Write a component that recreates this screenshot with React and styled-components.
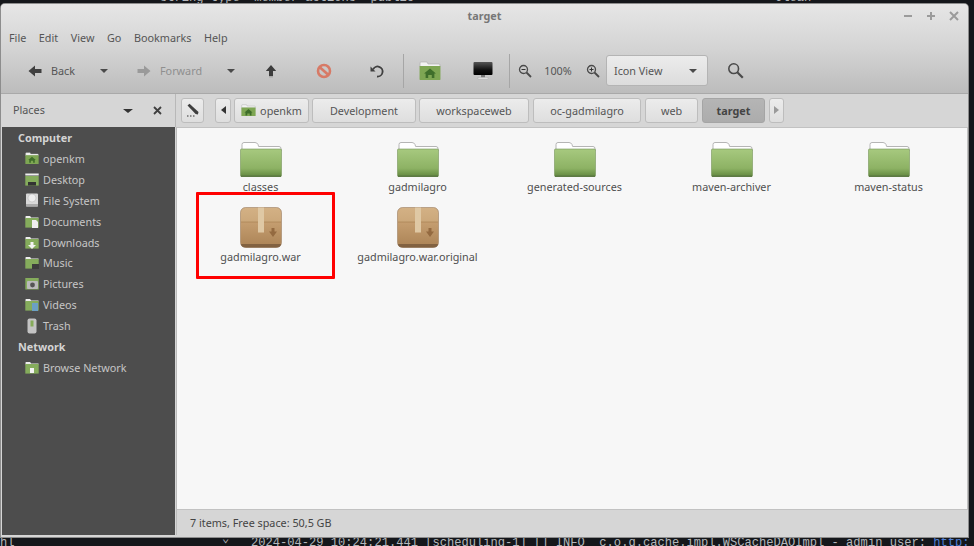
import React from "react"
import styled, { createGlobalStyle } from "styled-components"

const GlobalStyle = createGlobalStyle`
  html, body {
    margin: 0;
    padding: 0;
    height: 100%;
    background: #15171b;
    overflow: hidden;
  }
  #root {
    height: 100%;
  }
`

const Desktop = styled.div`
  position: relative;
  width: 974px;
  height: 546px;
  padding: 4px 6px 9px 1px;
  box-sizing: border-box;
  font-family: "Noto Sans", sans-serif;
  font-size: 10.8px;
  color: #555;
`

const TerminalLine = styled.div`
  position: absolute;
  left: ${(p) => p.$left}px;
  ${(p) => (p.$top !== undefined ? `top: ${p.$top}px;` : `bottom: ${p.$bottom}px;`)}
  font-family: "Liberation Mono", monospace;
  font-size: 12.1px;
  line-height: 12px;
  color: #b4b7bc;
  white-space: pre;
  span {
    color: #4f7fd6;
  }
`

const Window = styled.div`
  position: relative;
  height: 100%;
  display: flex;
  flex-direction: column;
  padding-bottom: 2px;
  box-sizing: border-box;
  border-radius: 4px 4px 0 0;
  background: #d6d6d6;
  box-shadow: 0 0 0 1px #8d8d8d;
  overflow: hidden;
`

const Header = styled.div`
  height: 89px;
  display: flex;
  flex-direction: column;
  flex: none;
  background: linear-gradient(#e6e6e6, #d4d4d4 50%, #bcbcbc);
  border-bottom: 1px solid #a9a9a9;
`

const TitleBar = styled.div`
  position: relative;
  height: 24px;
  flex: none;
  display: flex;
  align-items: center;
  justify-content: center;
  padding-bottom: 2px;
  box-sizing: border-box;
  font-weight: 700;
  color: #777;
`

const WindowButtons = styled.div`
  position: absolute;
  right: 7px;
  top: 5px;
  display: flex;
  gap: 9px;
`

const MenuBar = styled.div`
  height: 20px;
  flex: none;
  display: flex;
  align-items: center;
  padding: 0 0 2px 8px;
  box-sizing: border-box;
  gap: 12.6px;
`

const MenuItem = styled.span``

const Toolbar = styled.div`
  flex: 1;
  display: flex;
  align-items: center;
  padding-left: 27px;
`

const ToolLabel = styled.span`
  color: ${(p) => (p.$off ? "#8f8f8f" : "#555")};
  margin-left: 9px;
  padding-bottom: 1px;
`

const ToolGroup = styled.div`
  display: flex;
  align-items: center;
  width: ${(p) => p.$w}px;
  padding-left: ${(p) => p.$pl || 0}px;
  box-sizing: border-box;
  flex: none;
`

const Caret = styled.span`
  display: inline-block;
  width: 0;
  height: 0;
  border-left: ${(p) => p.$s || 4}px solid transparent;
  border-right: ${(p) => p.$s || 4}px solid transparent;
  border-top: ${(p) => (p.$s ? p.$s - 1 : 4)}px solid ${(p) => p.$c || "#4a4a4a"};
  margin-left: ${(p) => p.$ml || 0}px;
  margin-right: ${(p) => p.$mr || 0}px;
`

const Separator = styled.div`
  width: 1px;
  height: 34px;
  background: #a6a6a6;
  flex: none;
`

const ZoomLevel = styled.span`
  width: 28px;
  margin-right: 14px;
  text-align: center;
  white-space: nowrap;
  flex: none;
`

const ViewSelect = styled.div`
  width: 102px;
  height: 31px;
  flex: none;
  display: flex;
  align-items: center;
  justify-content: space-between;
  padding: 0 10px 0 7px;
  box-sizing: border-box;
  background: linear-gradient(#ececec, #dcdcdc);
  border: 1px solid #b4b4b4;
  border-radius: 3px;
  margin-left: 6px;
`

const PathRow = styled.div`
  height: 33px;
  flex: none;
  display: flex;
  align-items: center;
`

const PlacesHead = styled.div`
  width: 175px;
  flex: none;
  box-sizing: border-box;
  height: 100%;
  display: flex;
  align-items: center;
  padding: 0 13px 0 12px;
  border-right: 1px solid #b8b8b8;
`

const PlacesTitle = styled.span`
  flex: 1;
  padding-bottom: 2px;
`

const PathBar = styled.div`
  flex: 1;
  display: flex;
  align-items: center;
  padding-left: 5px;
`

const Crumb = styled.div`
  height: 25px;
  display: flex;
  align-items: center;
  justify-content: center;
  gap: 4px;
  flex: none;
  box-sizing: border-box;
  width: ${(p) => p.$w}px;
  margin-right: ${(p) => (p.$gap === undefined ? 4 : p.$gap)}px;
  padding-bottom: 1px;
  border: 1px solid ${(p) => (p.$active ? "#a5a5a5" : "#bdbdbd")};
  border-radius: 3px;
  background: ${(p) => (p.$active ? "linear-gradient(#b5b5b5, #acacac)" : "linear-gradient(#ececec, #dedede)")};
  font-weight: ${(p) => (p.$active ? 700 : 400)};
  color: ${(p) => (p.$active ? "#444" : "#555")};
`

const Tri = styled.span`
  display: inline-block;
  width: 0;
  height: 0;
  border-top: 4px solid transparent;
  border-bottom: 4px solid transparent;
  ${(p) =>
    p.$right
      ? `border-left: 5px solid ${p.$c};`
      : `border-right: 5px solid ${p.$c};`}
`

const Main = styled.div`
  flex: 1;
  min-height: 0;
  display: flex;
  padding-left: 1px;
`

const Sidebar = styled.div`
  width: 173px;
  flex: none;
  background: #4d4d4d;
  color: #d4d4d4;
  box-sizing: border-box;
  margin-right: 1px;
`

const SideHead = styled.div`
  height: 21px;
  line-height: 21px;
  padding-left: 16px;
  font-weight: 700;
`

const SideItem = styled.div`
  height: 20.9px;
  display: flex;
  align-items: center;
  gap: 4px;
  padding-left: 23px;
  color: #c6c6c6;
`

const SideIconBox = styled.span`
  width: 14px;
  height: 14px;
  flex: none;
  display: flex;
  align-items: center;
  justify-content: center;
`

const Content = styled.div`
  flex: 1;
  display: flex;
  flex-direction: column;
  min-width: 0;
  border-left: 1px solid #bbb;
`

const FileArea = styled.div`
  position: relative;
  flex: 1;
  background: #f7f7f7;
  border: 1px solid #c2c2c2;
  border-width: 1px 1px 1px 0;
  padding: 14px 0 0 5px;
  display: grid;
  grid-template-columns: repeat(5, 157px);
  grid-auto-rows: 65px;
  align-content: start;
  color: #4f4f4f;
`

const FileItem = styled.div`
  display: flex;
  flex-direction: column;
  align-items: center;
  white-space: nowrap;
`

const FileName = styled.span`
  line-height: 16px;
  margin-top: ${(p) => p.$mt}px;
`

const Highlight = styled.div`
  position: absolute;
  left: 19px;
  top: 64px;
  width: 139px;
  height: 87px;
  box-sizing: border-box;
  border: 3px solid #ff0000;
  border-radius: 1px;
`

const StatusBar = styled.div`
  height: 25px;
  flex: none;
  display: flex;
  align-items: center;
  padding-left: 13px;
  background: #d6d6d6;
  color: #444;
`

const Folder = () => (
  <svg width="42" height="35" viewBox="0 0 42 35">
    <defs>
      <linearGradient id="fg" x1="0" y1="0" x2="0" y2="1">
        <stop offset="0" stopColor="#a7c97f" />
        <stop offset="0.7" stopColor="#8db264" />
        <stop offset="1" stopColor="#62883f" />
      </linearGradient>
    </defs>
    <path d="M2 7V2.500q0-2 2-2h11q2 0 3 2l.6 2H39q2 0 2 2V9H2z" fill="#fff" stroke="#b5b5b5" />
    <rect x="0.500" y="7" width="41" height="27.500" rx="1" fill="url(#fg)" stroke="#77955a" strokeWidth="0.600" />
    <rect x="1" y="33.400" width="40" height="1.600" fill="#5d7a44" />
  </svg>
)

const Package = () => (
  <svg width="42" height="41" viewBox="0 0 42 41">
    <defs>
      <linearGradient id="pk" x1="0" y1="0" x2="0" y2="1">
        <stop offset="0" stopColor="#d3b185" />
        <stop offset="1" stopColor="#bd9768" />
      </linearGradient>
      <linearGradient id="pb" x1="0" y1="0" x2="0" y2="1">
        <stop offset="0" stopColor="#c59e70" />
        <stop offset="1" stopColor="#ab8356" />
      </linearGradient>
    </defs>
    <rect x="0.500" y="0.500" width="41" height="40" rx="5" fill="url(#pk)" stroke="#8d6e4f" strokeOpacity="0.500" />
    <path d="M1 15h40v20q0 5-5 5H6q-5 0-5-5z" fill="url(#pb)" />
    <path d="M1 15h40" stroke="#9c7646" strokeOpacity="0.500" />
    <path d="M1 37q0 3.500 5 3.500h30q5 0 5-3.500z" fill="#6f5237" opacity="0.700" />
    <rect x="18" y="0.500" width="6" height="25" fill="#dfc8a4" />
    <path d="M31.500 21h3v3.500h2.500L33 30l-4-5.500h2.500z" fill="#946a40" />
  </svg>
)

const HomeFolder = ({ size = 22 }) => (
  <svg width={size} height={size * 0.86} viewBox="0 0 22 19">
    <path d="M1 5V2q0-1 1-1h6l1 2h11q1 0 1 1v2H1z" fill="#f2f2f2" stroke="#aaa" strokeWidth="0.600" />
    <rect x="0.500" y="5" width="21" height="14" rx="0.600" fill="#7ea653" />
    <path d="M11 7.500l6 5h-1.600V17h-2.600v-3H9.200v3H6.600v-4.500H5z" fill="#3f6e2b" />
  </svg>
)

const Back = ({ flip, color }) => (
  <svg width="14" height="12" viewBox="0 0 14 12" style={flip ? { transform: "scaleX(-1)" } : undefined}>
    <path d="M7 0.500L0.500 6 7 11.500V8h6.500V4H7z" fill={color} />
  </svg>
)

const Up = () => (
  <svg width="12" height="14" viewBox="0 0 12 14">
    <path d="M6 1L.8 7H4v5.500h4V7h3.200z" fill="#3d3d3d" />
    <rect x="4" y="12" width="4" height="1.500" fill="#a9a9a9" />
  </svg>
)

const Stop = () => (
  <svg width="16" height="16" viewBox="0 0 16 16">
    <circle cx="8" cy="8" r="6" fill="none" stroke="#d77a66" strokeWidth="2.600" />
    <path d="M3.500 4l9 8" stroke="#d77a66" strokeWidth="2.600" />
  </svg>
)

const Reload = () => (
  <svg width="16" height="16" viewBox="0 0 16 16" fill="none">
    <path d="M4 6.500A5 5 0 1 1 8 13.500" stroke="#404040" strokeWidth="1.800" />
    <path d="M1.500 3.500v5h5z" fill="#404040" />
  </svg>
)

const Monitor = () => (
  <svg width="20" height="20" viewBox="0 0 20 20">
    <defs>
      <linearGradient id="scr" x1="0" y1="0" x2="0" y2="1">
        <stop offset="0" stopColor="#555" />
        <stop offset="0.600" stopColor="#111" />
        <stop offset="1" stopColor="#000" />
      </linearGradient>
    </defs>
    <rect x="0.500" y="1" width="19" height="13" rx="1" fill="url(#scr)" />
    <rect x="8" y="14" width="4" height="2.500" fill="#777" />
    <rect x="5" y="16.500" width="10" height="1.500" fill="#e9e9e9" stroke="#999" strokeWidth="0.300" />
  </svg>
)

const Magnifier = ({ plus, minus, size = 14 }) => (
  <svg width={size} height={size} viewBox="0 0 14 14" fill="none">
    <circle cx="5.500" cy="5.500" r="4" stroke="#4a4a4a" strokeWidth="1.300" />
    <path d="M8.500 8.500L13 13" stroke="#4a4a4a" strokeWidth="1.800" />
    {(plus || minus) && <path d="M3.500 5.500h4" stroke="#333" />}
    {plus && <path d="M5.500 3.500v4" stroke="#333" />}
  </svg>
)

const Pencil = () => (
  <svg width="14" height="14" viewBox="0 0 14 14">
    <path d="M1.500 2.500L3.500 0.800 12.500 9l-.6 2.400-2.300-.5z" fill="#3e3e3e" />
    <path d="M1 13h1.500M4 13h1.500M7 13h1.500" stroke="#333" />
  </svg>
)

const Close = () => (
  <svg width="9" height="9" viewBox="0 0 9 9">
    <path d="M1 1l7 7M8 1L1 8" stroke="#3f3f3f" strokeWidth="1.800" />
  </svg>
)

const TitleIcon = ({ d }) => (
  <svg width="14" height="14" viewBox="0 0 14 14">
    <path d={d} stroke="#9b9b9b" strokeWidth="2" fill="none" />
  </svg>
)

const SmallFolder = ({ overlay }) => (
  <svg width="14" height="13" viewBox="0 0 14 13">
    <path d="M0.500 3V1.500q0-.6.6-.6h4l1 1.500h7.400v1H.500z" fill="#eee" />
    <rect x="0.300" y="3" width="13.400" height="9.600" fill="#85ac5c" />
    {overlay}
  </svg>
)

const sideIcons = {
  home: <HomeFolder size={14} />,
  desktop: (
    <svg width="14" height="13" viewBox="0 0 14 13">
      <rect x="0.300" y="0.500" width="13.400" height="2" fill="#eee" />
      <rect x="0.300" y="3" width="13.400" height="9.600" fill="#85ac5c" />
      <rect x="3" y="9" width="8" height="3.500" fill="#333" />
    </svg>
  ),
  disk: (
    <svg width="14" height="14" viewBox="0 0 14 14">
      <rect x="1" y="0.500" width="12" height="13" rx="1" fill="#d8d8d8" />
      <circle cx="7" cy="5" r="4" fill="#ececec" stroke="#aaa" strokeWidth="0.400" />
      <rect x="1" y="11" width="12" height="2.500" fill="#aaa" />
    </svg>
  ),
  docs: <SmallFolder overlay={<path d="M7 5h4l2 2v6H7z" fill="#eee" />} />,
  down: <SmallFolder overlay={<path d="M5.500 6h3v3H11l-4 4-4-4h2.500z" fill="#f2f2f2" />} />,
  music: <SmallFolder overlay={<path d="M7 8h7v5H7z M9 12V9h2" fill="#3c3c3c" />} />,
  pics: (
    <svg width="14" height="13" viewBox="0 0 14 13">
      <rect x="0.300" y="1" width="13.400" height="11.500" fill="#85ac5c" />
      <rect x="2" y="4" width="11" height="8" rx="1" fill="#bbb" />
      <circle cx="7.500" cy="8" r="2.400" fill="#555" />
    </svg>
  ),
  video: <SmallFolder overlay={<rect x="7" y="5" width="6" height="8" fill="#6ba0c4" />} />,
  trash: (
    <svg width="14" height="16" viewBox="0 0 14 16">
      <rect x="2.500" y="0.500" width="9" height="15" rx="2" fill="#c4c4c4" />
      <rect x="5.500" y="2.500" width="3" height="6" fill="#86ab5a" />
    </svg>
  ),
  net: <SmallFolder overlay={<path d="M5 7h4v5H5z" fill="#f2f2f2" />} />,
}

const places = [
  ["home", "openkm"],
  ["desktop", "Desktop"],
  ["disk", "File System"],
  ["docs", "Documents"],
  ["down", "Downloads"],
  ["music", "Music"],
  ["pics", "Pictures"],
  ["video", "Videos"],
  ["trash", "Trash"],
]

const crumbs = [
  ["Development", 104, 3],
  ["workspaceweb", 110, 4],
  ["oc-gadmilagro", 108, 4],
  ["web", 53, 4],
]

const files = [
  ["classes", "folder"],
  ["gadmilagro", "folder"],
  ["generated-sources", "folder"],
  ["maven-archiver", "folder"],
  ["maven-status", "folder"],
  ["gadmilagro.war", "package"],
  ["gadmilagro.war.original", "package"],
]

export default function App() {
  return (
    <>
      <GlobalStyle />
      <Desktop>
        <TerminalLine $left={160} $top={-8}>string type  member-actions  public</TerminalLine>
        <TerminalLine $left={775} $top={-8}>Clean</TerminalLine>
        <TerminalLine $left={0} $bottom={-3}>hl</TerminalLine>
        <TerminalLine $left={222} $bottom={1}>⌄</TerminalLine>
        <TerminalLine $left={251} $bottom={-3}>
          2024-04-29 10:24:21.441 [scheduling-1] [] INFO  c.o.q.cache.impl.WSCacheDAOImpl - admin user: <span>http:</span>
        </TerminalLine>
        <Window>
          <Header>
            <TitleBar>
              target
              <WindowButtons>
                <TitleIcon d="M3 7h8" />
                <TitleIcon d="M3 7h8M7 3v8" />
                <TitleIcon d="M3 3l8 8M11 3l-8 8" />
              </WindowButtons>
            </TitleBar>
            <MenuBar>
              {["File", "Edit", "View", "Go", "Bookmarks", "Help"].map((m) => (
                <MenuItem key={m}>{m}</MenuItem>
              ))}
            </MenuBar>
            <Toolbar>
              <ToolGroup $w={109}>
                <Back color="#3f3f3f" />
                <ToolLabel>Back</ToolLabel>
                <Caret $ml={25} />
              </ToolGroup>
              <ToolGroup $w={128}>
                <Back flip color="#9a9a9a" />
                <ToolLabel $off>Forward</ToolLabel>
                <Caret $ml={25} />
              </ToolGroup>
              <ToolGroup $w={51}>
                <Up />
              </ToolGroup>
              <ToolGroup $w={53}>
                <Stop />
              </ToolGroup>
              <ToolGroup $w={34}>
                <Reload />
              </ToolGroup>
              <Separator />
              <ToolGroup $w={54} $pl={15}>
                <HomeFolder />
              </ToolGroup>
              <ToolGroup $w={51} $pl={15}>
                <Monitor />
              </ToolGroup>
              <Separator />
              <ToolGroup $w={34} $pl={8}>
                <Magnifier minus />
              </ToolGroup>
              <ZoomLevel>100%</ZoomLevel>
              <ToolGroup $w={14}>
                <Magnifier plus />
              </ToolGroup>
              <ViewSelect>
                Icon View
                <Caret />
              </ViewSelect>
              <ToolGroup $w={40} $pl={19}>
                <Magnifier size={17} />
              </ToolGroup>
            </Toolbar>
          </Header>
          <PathRow>
            <PlacesHead>
              <PlacesTitle>Places</PlacesTitle>
              <Caret $s={5} $c="#333" $mr={20} />
              <Close />
            </PlacesHead>
            <PathBar>
              <Crumb $w={23} $gap={11}>
                <Pencil />
              </Crumb>
              <Crumb $w={16} $gap={3}>
                <Tri $c="#333" />
              </Crumb>
              <Crumb $w={75} $gap={3}>
                <HomeFolder size={15} />
                openkm
              </Crumb>
              {crumbs.map(([label, w, gap]) => (
                <Crumb key={label} $w={w} $gap={gap}>
                  {label}
                </Crumb>
              ))}
              <Crumb $w={63} $active $gap={4}>
                target
              </Crumb>
              <Crumb $w={15} $gap={0}>
                <Tri $right $c="#9a9a9a" />
              </Crumb>
            </PathBar>
          </PathRow>
          <Main>
            <Sidebar>
              <SideHead>Computer</SideHead>
              {places.map(([icon, label]) => (
                <SideItem key={label}>
                  <SideIconBox>{sideIcons[icon]}</SideIconBox>
                  {label}
                </SideItem>
              ))}
              <SideHead>Network</SideHead>
              <SideItem>
                <SideIconBox>{sideIcons.net}</SideIconBox>
                Browse Network
              </SideItem>
            </Sidebar>
            <Content>
              <FileArea>
                {files.map(([name, kind]) => (
                  <FileItem key={name}>
                    {kind === "folder" ? <Folder /> : <Package />}
                    <FileName $mt={kind === "folder" ? 2 : 1}>{name}</FileName>
                  </FileItem>
                ))}
                <Highlight />
              </FileArea>
              <StatusBar>7 items, Free space: 50,5 GB</StatusBar>
            </Content>
          </Main>
        </Window>
      </Desktop>
    </>
  )
}
